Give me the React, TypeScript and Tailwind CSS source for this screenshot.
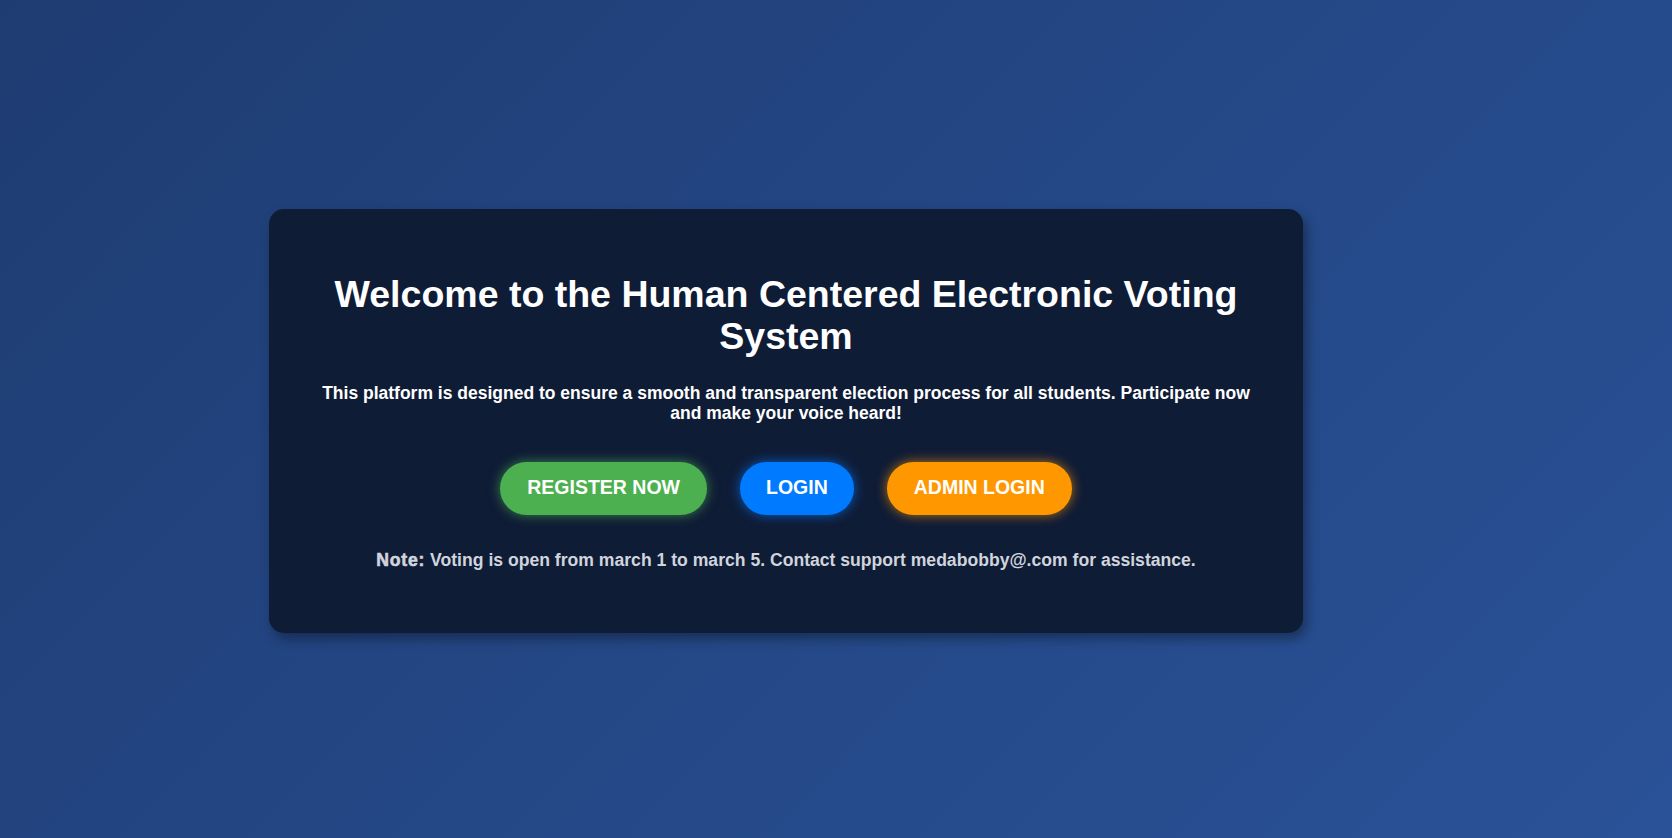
export default function App() {
  return (
    <div
      className="min-h-screen w-full flex items-center justify-center pr-[100px] pt-[4px] bg-[linear-gradient(135deg,#1e3c72,#2a5298)]"
      style={{ fontFamily: '"Liberation Sans", Arial, sans-serif' }}
    >
      <div className="w-[1034px] rounded-[15px] bg-[#0f1c36] px-10 pt-[64px] pb-[63px] text-center shadow-[4px_6px_12px_rgba(0,0,0,0.35)]">
        <h1 className="text-[37.5px] font-bold leading-[1.12] text-white">
          Welcome to the Human Centered Electronic Voting System
        </h1>
        <p className="mt-[26px] text-[17.5px] font-bold leading-[1.15] text-white">
          This platform is designed to ensure a smooth and transparent election process for all students. Participate now and make your voice heard!
        </p>

        <div className="mt-[38px] flex justify-center gap-[33px]">
          <button className="h-[53px] rounded-full bg-[#4caf50] px-[27px] text-[19.5px] font-bold uppercase text-white shadow-[0_0_12px_rgba(76,175,80,0.7)]">
            Register Now
          </button>
          <button className="h-[53px] rounded-full bg-[#007bff] px-[26px] text-[19.5px] font-bold uppercase text-white shadow-[0_0_12px_rgba(0,123,255,0.7)]">
            Login
          </button>
          <button className="h-[53px] rounded-full bg-[#ff9800] px-[27px] text-[19.5px] font-bold uppercase text-white shadow-[0_0_12px_rgba(255,152,0,0.7)]">
            Admin Login
          </button>
        </div>

        <p className="mt-[35px] text-[17.6px] font-bold leading-[1.15] text-[#cfd4dd]">
          <strong className="font-black tracking-[0.8px] [-webkit-text-stroke:0.6px_#cfd4dd]">Note:</strong> Voting is open from march 1 to march 5. Contact support medabobby@.com for assistance.
        </p>
      </div>
    </div>
  )
}
